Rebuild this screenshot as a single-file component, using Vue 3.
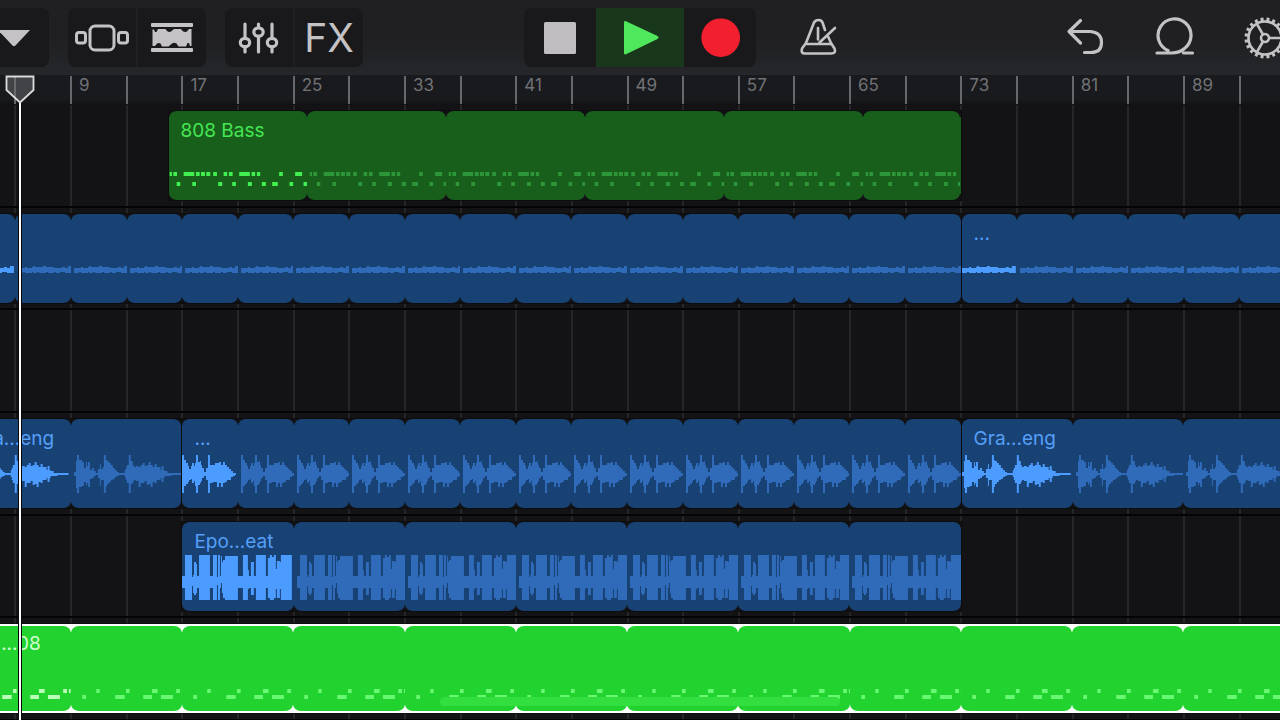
<script setup>
const FIRST_BAR = 3.96
const VISIBLE_BARS = 92
const BAR_PX = 13.913
const CLIP_HEIGHT = 89

const pct = (bars) => (bars / VISIBLE_BARS) * 100 + '%'

const ticks = Array.from({ length: 23 }, (_, i) => {
  const bar = 5 + i * 4
  return { bar, label: i > 0 && i % 2 === 1 ? String(bar) : '' }
})

const row = (y, pairs) => pairs.map(([a, b]) => `M${a} ${y}H${b}V${y + 4}H${a}Z`).join('')

// Each step is [x, height above the centre line, height below it].
const wave = (center, steps) => {
  let up = `M${steps[0][0]} ${center}`
  let down = ''
  steps.forEach(([x, u, d], i) => {
    const next = i + 1 < steps.length ? steps[i + 1][0] : x
    up += `L${x} ${center - u}L${next} ${center - u}`
    down = `L${next} ${center + d}L${x} ${center + d}` + down
  })
  return up + down + 'Z'
}

const bass = row(61, [[0.7, 3], [4.3, 8], [14.7, 25.3], [27, 30.7], [32, 36], [37.3, 41.3], [44.3, 48], [54.7, 58.3], [60, 63.7], [70.3, 81], [82.7, 86.3], [88, 91.3], [110.3, 114], [126.3, 133.3]])
  + row(71, [[7.7, 11.3], [23.3, 27], [49.3, 53.3], [63.3, 67], [79, 83], [93, 97], [103.3, 109], [120.7, 124.3], [134.7, 138.3]])

const kick = row(65, [[23.3, 26.7], [53, 56.7], [79, 84.7], [103.3, 107], [109, 110.7]])
  + row(71, [[9.3, 13], [42.3, 51.7], [70.3, 79], [88, 100]])

const hum = wave(56, [[0, 2, 3], [5, 2, 2], [7, 3, 3], [9, 2, 3], [14, 3, 2], [15, 4, 3], [17, 3, 3], [19, 3, 2], [21, 3, 3], [25, 4, 3], [28, 3, 2], [30, 3, 3], [36, 2, 2], [38, 2, 3], [42, 2, 2], [44, 3, 2], [47, 2, 3], [50, 4, 3], [54, 0, 0]])

const grand = wave(55, [[0, 2, 2], [2, 13, 14], [3, 19, 19], [5, 14, 13], [8, 12, 12], [10, 6, 8], [12, 12, 11], [13, 8, 9], [14, 12, 13], [16, 4, 5], [18, 6, 4], [20, 3, 2], [22, 1, 1], [24, 5, 4], [26, 10, 12], [27, 5, 6], [29, 7, 6], [30, 19, 19], [32, 14, 13], [33, 13, 10], [35, 11, 8], [37, 9, 6], [39, 6, 5], [41, 4, 3], [43, 2, 2], [45, 1, 1], [51, 4, 3], [52, 6, 6], [53, 9, 9], [55, 19, 19], [57, 13, 10], [59, 9, 8], [60, 7, 6], [62, 8, 7], [65, 7, 13], [67, 9, 9], [69, 11, 9], [71, 8, 7], [73, 9, 11], [75, 12, 10], [77, 9, 13], [79, 7, 8], [81, 10, 9], [83, 7, 6], [87, 4, 4], [88, 8, 8], [90, 4, 4], [91, 3, 2], [94, 1, 2], [98, 1, 1], [109, 0, 0]])

const short = wave(55, [[0, 19, 19], [2, 14, 12], [4, 11, 10], [6, 8, 8], [7, 5, 6], [9, 8, 5], [10, 11, 9], [12, 8, 7], [13, 11, 12], [14, 19, 19], [16, 12, 11], [18, 13, 9], [19, 9, 7], [20, 6, 4], [22, 2, 2], [24, 6, 6], [26, 19, 19], [28, 9, 9], [31, 9, 8], [33, 11, 8], [35, 11, 13], [37, 12, 9], [39, 9, 13], [41, 12, 9], [43, 9, 8], [45, 7, 6], [47, 5, 6], [49, 3, 3], [51, 1, 2], [53, 1, 1], [54, 0, 0]])

const T = [2, 10]
const beat = wave(56, [[0, ...T], [3, 23, 22], [10, 1, 8], [11, 3, 15], [12, 16, 17], [14, 14, 15], [15, ...T], [17, 23, 22], [28, ...T], [31, 23, 22], [35, 1, 7], [36, 23, 22], [38, ...T], [39, 22, 5], [40, 16, 15], [41, 18, 20], [43, 22, 22], [56, ...T], [61, 23, 22], [66, 8, 11], [67, ...T], [69, 16, 17], [72, ...T], [74, 23, 22], [84, ...T], [86, 20, 20], [88, 23, 22], [90, 21, 22], [92, 23, 20], [94, 9, 11], [95, 17, 20], [98, 16, 11], [99, 23, 22], [110, 0, 0]])

const tracks = [
  { color: 'green', shift: 2, clips: [{ start: 16, end: 73, loop: 10, name: '808 Bass', art: bass }] },
  { color: 'blue', shift: 3, clips: [
    { start: 1, end: 73, loop: 4, name: '', art: hum },
    { start: 73, end: 97, loop: 4, name: '...', art: hum }
  ] },
  { color: 'blue', shift: 3, clips: [] },
  { color: 'blue', shift: 3, clips: [
    { start: 1, end: 17, loop: 8, name: 'Gra...eng', art: grand },
    { start: 17, end: 73, loop: 4, name: '...', art: short },
    { start: 73, end: 97, loop: 8, name: 'Gra...eng', art: grand }
  ] },
  { color: 'blue', shift: 3, clips: [{ start: 17, end: 73, loop: 8, name: 'Epo...eat', art: beat }] },
  { color: 'selected', shift: 2, clips: [{ start: 1, end: 97, loop: 8, name: '...08', art: kick }] }
]

for (const track of tracks) {
  let cursor = FIRST_BAR
  for (const clip of track.clips) {
    clip.gap = clip.start - cursor
    clip.bars = clip.end - clip.start
    cursor = clip.end
    clip.segments = []
    for (let b = clip.start; b < clip.end; b += clip.loop) {
      clip.segments.push(Math.min(clip.loop, clip.end - b))
    }
  }
}

const viewBox = (bars, selected) =>
  selected ? `0 2 ${bars * BAR_PX} ${CLIP_HEIGHT - 4}` : `0 0 ${bars * BAR_PX} ${CLIP_HEIGHT}`

const teeth = Array.from({ length: 20 }, (_, i) => i * 18 + 9)
</script>

<template>
  <div class="app">
    <header class="toolbar">
      <div class="side">
        <div class="group first">
          <button class="tool" aria-label="Menu">
            <svg width="34" height="20" viewBox="0 0 34 20"><path d="M2 2H34L19.500 17.500Q18 19 16.500 17.500Z" fill="#c4c2c5" /></svg>
          </button>
        </div>
        <div class="group">
          <button class="tool" aria-label="Browser">
            <svg width="56" height="32" viewBox="0 0 56 32" fill="none" stroke="#c4c2c5" stroke-width="3">
              <rect x="16" y="4" width="24" height="24" rx="5" />
              <rect x="2.500" y="10.500" width="9" height="10.500" rx="2.500" />
              <rect x="44.500" y="10.500" width="9" height="10.500" rx="2.500" />
            </svg>
          </button>
          <button class="tool" aria-label="Tracks">
            <svg width="44" height="32" viewBox="0 0 44 32" fill="#c4c2c5">
              <rect x="1" y="1" width="42" height="4" rx="1" />
              <rect x="1" y="26" width="42" height="4" rx="1" />
              <path d="M2.500 7.500H4L5 10H6.500L8 7H15.500L17 9Q19 10.500 21 9.500L24 7H31L32.500 9Q35 10.500 37 9.500L39 7H41.500V24H40L39 21H37.500L36 24.500H28.500L26.500 21.500Q24 20 22 21.500L18.500 24.500H12L10.500 21.500Q9 20.500 7 21.500L5 24H2.500Z" />
            </svg>
          </button>
        </div>
        <div class="group">
          <button class="tool" aria-label="Mixer">
            <svg width="42" height="36" viewBox="0 0 42 36" fill="none" stroke="#c4c2c5" stroke-width="3.200" stroke-linecap="round">
              <path d="M7 4V17M7 28V32M20.500 4V6M20.500 17V32M34 4V17M34 28V32" />
              <ellipse cx="7" cy="22.500" rx="4.700" ry="4.200" />
              <ellipse cx="20.500" cy="12" rx="4.700" ry="4.200" />
              <ellipse cx="34" cy="22.500" rx="4.700" ry="4.200" />
            </svg>
          </button>
          <button class="tool fx">FX</button>
        </div>
      </div>

      <div class="group">
        <button class="tool" aria-label="Stop">
          <svg width="34" height="34" viewBox="0 0 34 34"><rect x="1" y="1" width="32" height="32" rx="1.500" fill="#c0bdc1" /></svg>
        </button>
        <button class="tool play" aria-label="Play">
          <svg width="38" height="36" viewBox="0 0 38 36"><path d="M3 2.500Q3 .5 5 1.300L36.500 16Q38.500 17.500 36.500 19L5 34.200Q3 35 3 33Z" fill="#4fe75c" /></svg>
        </button>
        <button class="tool" aria-label="Record">
          <svg width="42" height="40" viewBox="0 0 42 40"><circle cx="21.700" cy="19.700" r="19.300" fill="#f21f2e" /></svg>
        </button>
      </div>

      <div class="side">
        <button class="plain metronome" aria-label="Metronome">
          <svg width="40" height="40" viewBox="0 0 40 40" fill="none" stroke="#c4c2c5" stroke-width="2.600" stroke-linecap="round" stroke-linejoin="round">
            <path d="M26 12L23.500 4.500Q22.500 2 19.500 2T15 4.500L7 25L3 30.500Q1.500 35.500 6 35.500H32Q37.500 35.500 35.500 30.500L32 25L29 18.500" />
            <path d="M7 26H32M19 10V21.500M20.500 24.500L36 10" />
          </svg>
        </button>
        <button class="plain undo" aria-label="Undo">
          <svg width="40" height="40" viewBox="0 0 40 40" fill="none" stroke="#c4c2c5" stroke-width="3.200" stroke-linecap="round" stroke-linejoin="round">
            <path d="M15.500 2.500L4 13.500L15.500 25M4.500 13.500H25.500Q36.500 14.500 36.500 24.500T26 34.500H19.500" />
          </svg>
        </button>
        <button class="plain" aria-label="Loop browser">
          <svg width="42" height="42" viewBox="0 0 42 42" fill="none" stroke="#c4c2c5" stroke-width="3.200" stroke-linecap="round">
            <path d="M14 33.500A16.500 16.500 0 1 1 30.500 31.500Q25.500 36 17.500 36H3M29.500 36H38.500" />
          </svg>
        </button>
        <button class="plain" aria-label="Settings">
          <svg width="44" height="44" viewBox="-22 -22 44 44" fill="none" stroke="#c4c2c5" stroke-width="2.600">
            <circle r="16.500" />
            <circle r="4" />
            <path d="M4 0H16.500M-2 -3.500L-8.300 -14.300M-2 3.500L-8.300 14.300" />
            <path v-for="a in teeth" :key="a" d="M17 0H20.500" stroke-width="3" :transform="`rotate(${a})`" />
          </svg>
        </button>
      </div>
    </header>

    <main class="timeline">
      <div class="ruler">
        <span v-for="(t, i) in ticks" :key="t.bar" class="tick" :style="{ width: pct(4), marginLeft: i ? '0' : pct(5 - FIRST_BAR) }">{{ t.label }}</span>
      </div>

      <div class="lanes">
        <div class="gridlines">
          <i v-for="(t, i) in ticks" :key="t.bar" :style="{ width: pct(4), marginLeft: i ? '0' : pct(5 - FIRST_BAR) }"></i>
        </div>
        <section v-for="(track, n) in tracks" :key="n" class="lane" :class="track.color">
          <div v-for="clip in track.clips" :key="clip.start" class="slot" :style="{ marginLeft: pct(clip.gap), width: pct(clip.bars) }">
            <div class="clip">
              <div v-for="(bars, s) in clip.segments" :key="s" class="segment" :style="{ width: (bars / clip.bars) * 100 + '%' }">
                <svg :viewBox="viewBox(bars, track.color === 'selected')" preserveAspectRatio="none">
                  <path :class="s ? 'dim' : 'bright'" :d="clip.art" :transform="s ? `translate(${track.shift} 0)` : null" />
                </svg>
              </div>
              <span v-if="clip.name" class="name">{{ clip.name }}</span>
            </div>
          </div>
        </section>
      </div>

      <div class="playhead">
        <svg width="30" height="30" viewBox="0 0 30 30"><path d="M1.500 1.500H28.500V15L15 27.500L1.500 15Z" fill="#6b6b6e" fill-opacity=".5" stroke="#dcdcdc" stroke-width="1.800" /></svg>
        <div class="needle"></div>
      </div>
    </main>
    <div class="home"></div>
  </div>
</template>

<style>
html,
body {
  background: #131315;
}
</style>

<style scoped>
.app {
  position: relative;
  display: flex;
  flex-direction: column;
  height: 100vh;
  min-height: 720px;
  overflow: hidden;
  background: #131315;
  font-family: Inter, "Liberation Sans", sans-serif;
}
.toolbar {
  display: grid;
  grid-template-columns: minmax(0, 1fr) auto minmax(0, 1fr);
  padding: 8px 0;
  background: linear-gradient(#202022 55%, #25272b);
}
.side {
  display: flex;
  gap: 19px;
}
.side:last-child {
  gap: 0;
}
.group {
  display: flex;
  gap: 2px;
  overflow: hidden;
  border-radius: 8px;
  background: #1f2022;
}
.first {
  margin-left: -23px;
}
button {
  display: flex;
  align-items: center;
  justify-content: center;
  flex: none;
  height: 59px;
  padding: 0;
  border: 0;
  color: #c4c2c5;
  font-family: inherit;
}
.tool {
  width: 68px;
  background: #19191b;
}
.first .tool,
.toolbar > .group .tool {
  width: 72px;
}
.toolbar > .group {
  gap: 0;
}
.toolbar > .group .play {
  width: 88px;
  background: #19371b;
}
.fx {
  font-size: 39px;
  line-height: 48px;
}
.plain {
  width: 90px;
  background: none;
}
.metronome {
  margin-left: 18px;
}
.undo {
  margin-left: auto;
}
.side:last-child > :last-child {
  margin-right: -30px;
}
.timeline {
  position: relative;
  display: flex;
  flex: 1;
  flex-direction: column;
  margin-bottom: -1px;
}
.ruler {
  display: flex;
  height: 30px;
  overflow: hidden;
  background: linear-gradient(#191a1e 80%, #121214);
}
.tick {
  flex: none;
  box-sizing: border-box;
  height: 28px;
  margin-top: 1px;
  padding-left: 7px;
  border-left: 2px solid #67686b;
  color: #717275;
  font-size: 17px;
  line-height: 18px;
}
.lanes {
  position: relative;
  display: grid;
  flex: 1;
  grid-auto-rows: minmax(102px, 1fr);
  overflow: hidden;
}
.gridlines {
  position: absolute;
  inset: 0;
  display: flex;
}
.gridlines i {
  flex: none;
  box-sizing: border-box;
  border-left: 2px solid #262628;
}
.lane {
  --edge: #111114;
  position: relative;
  display: flex;
  align-items: flex-start;
  box-sizing: border-box;
  padding-top: 6px;
  border-bottom: 2px solid #040404;
}
.green {
  --fill: #195f1c;
}
.blue {
  --fill: #184174;
}
.selected {
  --fill: #22d32f;
  --edge: #fff;
}
.slot {
  flex: none;
  box-sizing: border-box;
  padding-left: 1px;
}
.clip {
  position: relative;
  display: flex;
  box-sizing: border-box;
  height: 89px;
  background: linear-gradient(var(--edge) 6px, var(--fill) 6px calc(100% - 6px), var(--edge) calc(100% - 6px));
  box-shadow: 0 0 0 1px #0d0d10;
}
.segment {
  overflow: hidden;
  border-radius: 8px / 7px;
  background: var(--fill);
}
.segment svg {
  display: block;
  width: 100%;
  height: 100%;
}
.name {
  position: absolute;
  top: 9px;
  left: 12px;
  font-size: 19px;
  line-height: 22px;
}
.green .name {
  color: #45e653;
}
.green .bright {
  fill: #41ef50;
}
.green .dim {
  fill: #2d9638;
}
.blue .name {
  color: #569ff8;
}
.blue .bright {
  fill: #4c9cff;
}
.blue .dim {
  fill: #306bb9;
}
.selected .clip {
  border: solid #fff;
  border-width: 2px 0;
}
.selected .name {
  top: 7px;
  width: 69px;
  color: #d0ffd2;
  text-align: right;
}
.selected .bright {
  fill: #b9ffba;
}
.selected .dim {
  fill: #69f873;
}
.playhead {
  position: absolute;
  top: 0;
  bottom: 0;
  left: 5px;
  display: flex;
  flex-direction: column;
  align-items: center;
}
.playhead svg {
  display: block;
}
.needle {
  flex: 1;
  width: 2px;
  margin-top: -2px;
  border: solid #08080a;
  border-width: 0 1px;
  background: #fff;
}
.home {
  position: absolute;
  bottom: 14px;
  left: 50%;
  width: 400px;
  height: 9px;
  margin-left: -200px;
  border-radius: 5px;
  background: #33df3e;
}
</style>
